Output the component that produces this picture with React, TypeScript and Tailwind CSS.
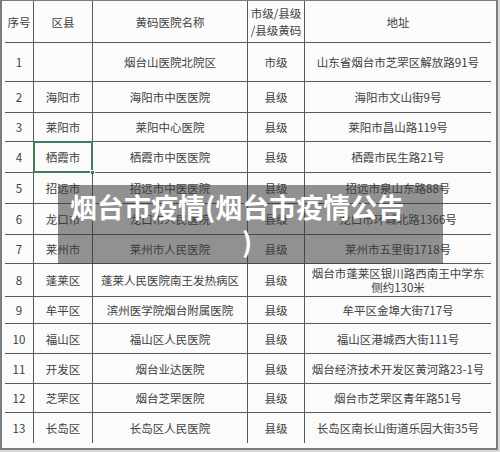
const ROWS = [
  { no: "1", area: "", name: "烟台山医院北院区", level: "市级", addr: "山东省烟台市芝罘区解放路91号", h: "h-[39px]" },
  { no: "2", area: "海阳市", name: "海阳市中医医院", level: "县级", addr: "海阳市文山街9号", h: "h-[31px]" },
  { no: "3", area: "莱阳市", name: "莱阳中心医院", level: "县级", addr: "莱阳市昌山路119号", h: "h-[29px]" },
  { no: "4", area: "栖霞市", name: "栖霞市中医医院", level: "县级", addr: "栖霞市民生路21号", h: "h-[31px]", selected: true },
  { no: "5", area: "招远市", name: "招远市中医医院", level: "县级", addr: "招远市泉山东路88号", h: "h-[31px]" },
  { no: "6", area: "龙口市", name: "龙口市人民医院", level: "县级", addr: "龙口市环城北路1366号", h: "h-[31px]" },
  { no: "7", area: "莱州市", name: "莱州市人民医院", level: "县级", addr: "莱州市五里街1718号", h: "h-[29px]" },
  { no: "8", area: "蓬莱区", name: "蓬莱人民医院南王发热病区", level: "县级", addr: "烟台市蓬莱区银川路西南王中学东|侧约130米", h: "h-[33px]" },
  { no: "9", area: "牟平区", name: "滨州医学院烟台附属医院", level: "县级", addr: "牟平区金埠大街717号", h: "h-[27px]" },
  { no: "10", area: "福山区", name: "福山区人民医院", level: "县级", addr: "福山区港城西大街111号", h: "h-[30px]" },
  { no: "11", area: "开发区", name: "烟台业达医院", level: "县级", addr: "烟台经济技术开发区黄河路23-1号", h: "h-[30px]" },
  { no: "12", area: "芝罘区", name: "烟台芝罘医院", level: "县级", addr: "烟台市芝罘区青年路51号", h: "h-[29px]" },
  { no: "13", area: "长岛区", name: "长岛区人民医院", level: "县级", addr: "长岛区南长山街道乐园大街35号", h: "h-[30px]" },
];

const cell = "flex items-center justify-center text-center border-[#585858]";

export default function App() {
  return (
    <div
      className="w-[500px] h-[452px] bg-[#dcdcdc] overflow-hidden"
      style={{ fontFamily: '"Noto Sans CJK SC", "Noto Sans", sans-serif' }}
    >
      <div className="relative w-[498px] h-[450px] bg-[#fbfbfb] border-2 border-[#7c7c7c] border-t-[1px] overflow-hidden">
        <div className="ml-[3px] w-[486px] text-[11.5px] leading-[14px] text-[#404040]">
          {/* header */}
          <div className="grid grid-cols-[29px_59px_155px_57px_186px] h-[42px]">
            <div className={`${cell} border-r border-b`}>序号</div>
            <div className={`${cell} border-r border-b`}>区县</div>
            <div className={`${cell} border-r border-b`}>黄码医院名称</div>
            <div className={`${cell} border-r border-b leading-[17px]`}>
              市级/县级
              <br />
              /县级黄码
            </div>
            <div className={`${cell} border-b`}>地址</div>
          </div>

          {ROWS.map((r, i) => {
            const last = i === ROWS.length - 1;
            const b = last ? "" : "border-b";
            return (
              <div key={r.no} className={`grid grid-cols-[29px_59px_155px_57px_186px] ${r.h}`}>
                <div className={`${cell} border-r ${b}`}>{r.no}</div>
                <div className={`${cell} border-r ${b} relative`}>
                  {r.area}
                  {r.selected && (
                    <>
                      <div className="absolute -left-px -top-px -right-px -bottom-px border-2 border-[#3f7d5c]" />
                      <div className="absolute -right-[3px] -bottom-[3px] w-[5px] h-[5px] bg-[#3f7d5c] border border-white" />
                    </>
                  )}
                </div>
                <div className={`${cell} border-r ${b}`}>{r.name}</div>
                <div className={`${cell} border-r ${b}`}>{r.level}</div>
                <div className={`${cell} ${b} leading-[14px]`}>
                  {r.addr.includes("|") ? (
                    <span>
                      {r.addr.split("|")[0]}
                      <br />
                      {r.addr.split("|")[1]}
                    </span>
                  ) : (
                    r.addr
                  )}
                </div>
              </div>
            );
          })}
        </div>

        {/* title banner */}
        <div className="absolute left-[56px] top-[184px] w-[385px] h-[79px] bg-[#3a3a3a]/55">
          <p className="pl-[12px] pt-[4px] text-[27px] leading-[35px] font-bold text-white">
            烟台市疫情(烟台市疫情公告
            <br />
            <span className="ml-[172px]">)</span>
          </p>
        </div>
      </div>
    </div>
  );
}
